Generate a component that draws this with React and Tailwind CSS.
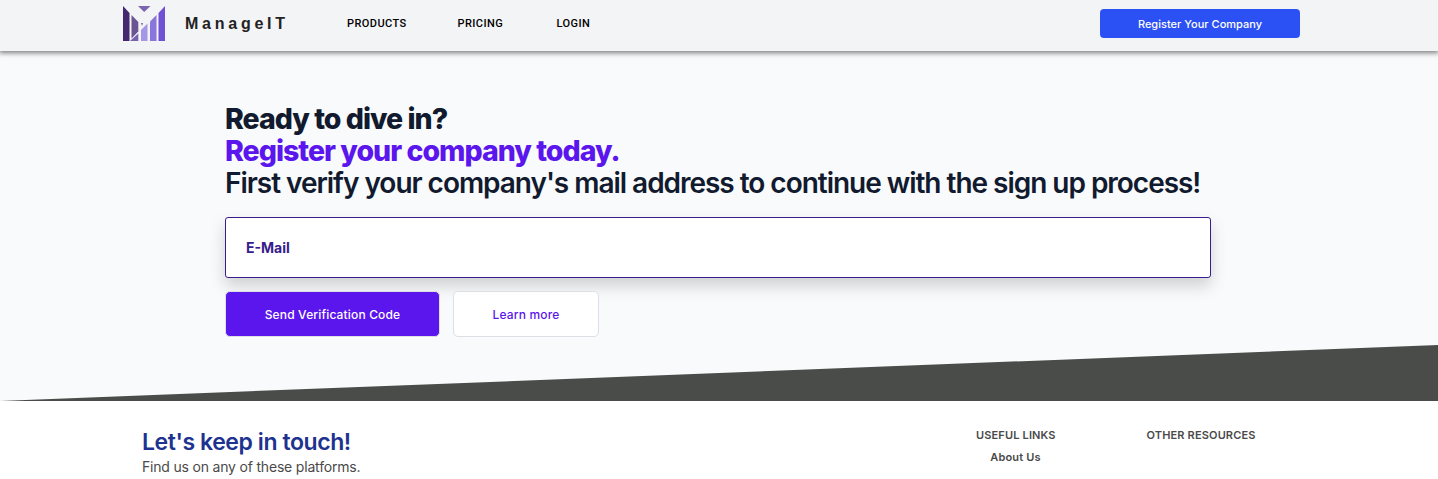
import React from "react";

function Logo() {
  return (
    <svg width="42" height="35" viewBox="0 0 42 35" className="shrink-0">
      <path d="M0 0L6.500 7V35H0Z" fill="#44276f" />
      <path d="M8.500 9L15.300 16V25.500L8.500 32.500Z" fill="#6a5492" />
      <path d="M7 35L15.300 27.500V35Z" fill="#7561ad" />
      <path d="M15 0H27.500L21.200 6Z" fill="#7a65ae" />
      <path d="M18 17H20L19 20Z" fill="#7a65ae" />
      <path d="M18 24L24.500 17.500V35H18Z" fill="#a596e6" />
      <path d="M27 15.500L33.500 9V35H27Z" fill="#8a75dc" />
      <path d="M35.500 7L42 0V35H35.500Z" fill="#7050d3" />
    </svg>
  );
}

function Header() {
  return (
    <header className="relative h-[51px] bg-[#f3f4f6] pl-[123px] pr-[138px] flex items-start shadow-[0_1px_5px_1px_rgba(0,0,0,0.5)]">
      <div className="flex items-start pt-[6px] w-[224px]">
        <Logo />
        <span className="ml-[20px] mt-[6px] font-['Liberation_Sans',sans-serif] font-bold text-[16px] leading-6 tracking-[3.75px] text-[#222]">ManageIT</span>
      </div>
      <nav className="flex pt-[16px] font-[Roboto,sans-serif] font-medium text-[11px] leading-4 tracking-[0.42px] text-black">
        <a className="w-[110.500px]">PRODUCTS</a>
        <a className="w-[99px]">PRICING</a>
        <a>LOGIN</a>
      </nav>
      <button className="ml-auto mt-[9px] h-[29px] w-[200px] rounded-[4px] bg-[#2b50f3] pt-px text-white text-[11px] font-medium tracking-[0.02px]">Register Your Company</button>
    </header>
  );
}

function Hero() {
  return (
    <main className="h-[294px] px-[225px] pt-[52px]">
      <h2 className="text-[28.5px] leading-8 font-extrabold text-[#111a2e] whitespace-nowrap">
        <span className="block tracking-[-0.98px]">Ready to dive in?</span>
        <span className="block tracking-[-0.99px] text-[#5b15ed]">Register your company today.</span>
        <span className="block text-[28px] font-semibold tracking-[-1.03px]">First verify your company's mail address to continue with the sign up process!</span>
      </h2>
      <div className="mt-[18px] h-[61px] w-[986px] rounded-[3px] border border-[#3b1c8c] bg-white pl-5 flex items-center text-[14px] font-bold text-[#35208a] shadow-[0_8px_16px_rgba(0,0,0,0.17)]">
        E-Mail
      </div>
      <div className="mt-[13px] flex gap-[13px] text-[12px] font-medium tracking-[0.16px]">
        <button className="h-[46px] w-[215px] rounded-[5px] border border-[#dcdfe6] bg-[#5b15ed] pt-px text-white">Send Verification Code</button>
        <button className="h-[46px] w-[146px] rounded-[5px] border border-[#dcdfe6] bg-white pt-px text-[#5b15ed]">Learn more</button>
      </div>
    </main>
  );
}

function Footer() {
  return (
    <footer className="h-[78px] bg-white pl-[142px] flex">
      <div className="w-[834px] pt-[25px]">
        <h4 className="text-[23px] leading-8 font-semibold tracking-[-0.42px] text-[#1e3290]">Let's keep in touch!</h4>
        <p className="text-[14px] leading-[18px] tracking-[-0.19px] text-[#4a4a4a]">Find us on any of these platforms.</p>
      </div>
      <div className="flex items-start gap-[91.500px] pt-[26px] text-[11px] leading-4 font-semibold tracking-[0.15px] text-[#4a4a4a]">
        <div className="w-[79px] text-center whitespace-nowrap">
          <div>USEFUL LINKS</div>
          <div className="mt-[6px]">About Us</div>
        </div>
        <div className="whitespace-nowrap">OTHER RESOURCES</div>
      </div>
    </footer>
  );
}

export default function App() {
  return (
    <div className="h-[479px] w-[1438px] overflow-hidden bg-[#f9fafc] font-[Inter,sans-serif]">
      <Header />
      <Hero />
      <svg className="block" width="1438" height="56" viewBox="0 0 1438 56" preserveAspectRatio="none">
        <path d="M1438 0V56H0Z" fill="#4a4c4a" />
      </svg>
      <Footer />
    </div>
  );
}
